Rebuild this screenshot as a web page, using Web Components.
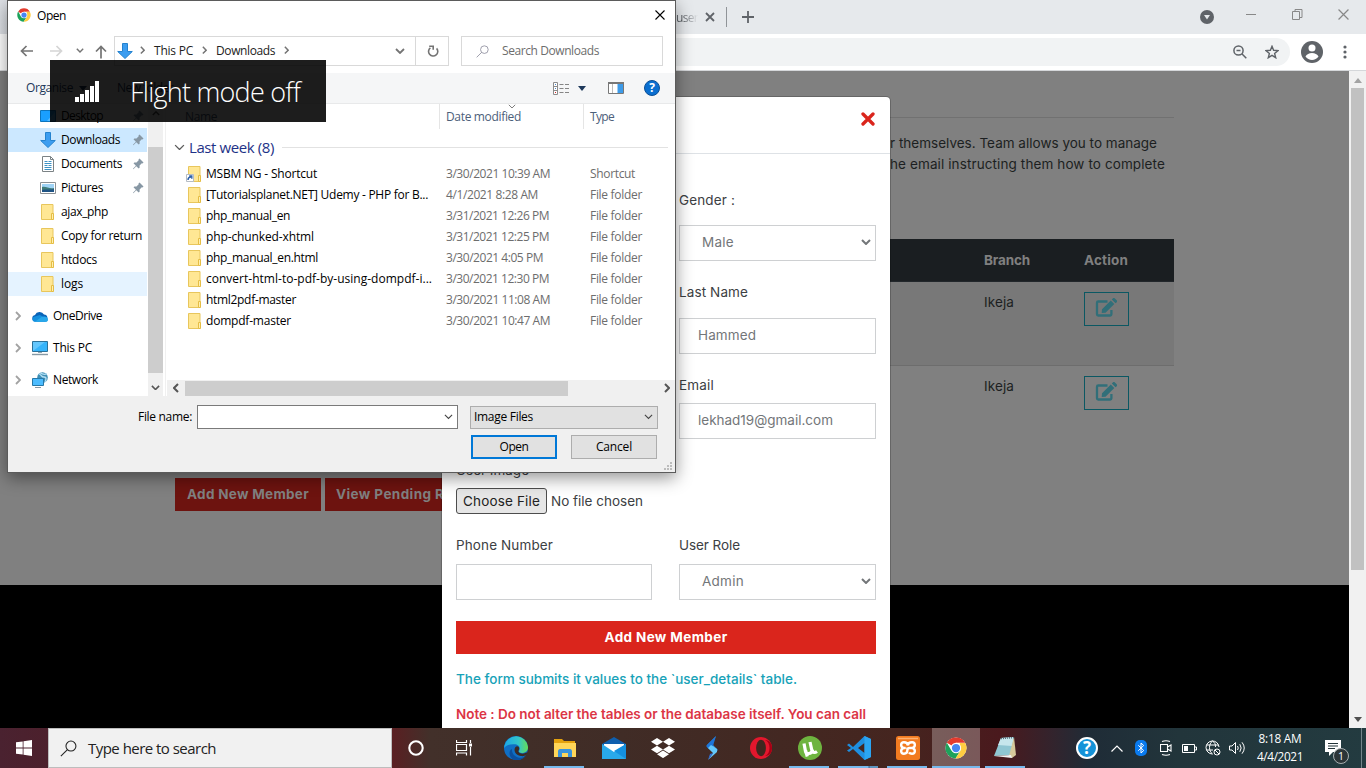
<!DOCTYPE html>
<html lang="en">
<head>
<meta charset="utf-8">
<title>Desktop</title>
<style>
html,body{margin:0;height:100%;overflow:hidden;background:#000}
body{font-family:"Open Sans","Noto Sans",sans-serif}
</style>
</head>
<body>
<desk-top></desk-top>
<script>
const folder = '<path d="M.5.5h11.500v15H.5z" fill="#ffe794" stroke="#e8c65c"/><path d="M10.500 9.500h2v6h-2z" fill="#fff0b0" stroke="#e5bd45"/>';
const chromeArt = '<circle cx="12" cy="12" r="11.500" fill="#fff"/><path d="M12 12 2 6.300A11.500 11.500 0 0 1 22 6.300H12z" fill="#e33b2e"/><path d="M2 6.200A11.500 11.500 0 0 0 11.500 23.500L17 14.800 12 12 7 14.800z" fill="#1da25b"/><path d="M22 6.500A11.500 11.500 0 0 1 11.500 23.500L17 14.800 16 6.500z" fill="#ffcd42"/><circle cx="12" cy="12" r="5.600" fill="#fff"/><circle cx="12" cy="12" r="4.500" fill="#4587f3"/>';
const monitor = '<path d="M.5 1.500h15v10h-15z" fill="#35b4fb" stroke="#2b7199"/><path d="M1 11 13 2H1z" fill="#83d3ff" opacity=".6"/>';
const ICONS = {
 chrome:[24,24,chromeArt],
 close:[10,10,'<path d="M.5.5l9 9M9.500.5l-9 9" stroke="currentColor" stroke-width="1.100"/>'],
 closeTab:[10,10,'<path d="M1 1l8 8M9 1l-8 8" stroke="currentColor" stroke-width="1.800"/>'],
 back:[14,12,'<path d="M13 6H1.500M6.500 1l-5 5 5 5" stroke="currentColor" stroke-width="1.700" fill="none"/>'],
 fwd:[14,12,'<path d="M1 6h11.500M7.500 1l5 5-5 5" stroke="currentColor" stroke-width="1.700" fill="none"/>'],
 up:[12,14,'<path d="M6 13.500V1.500M1 6.500l5-5 5 5" stroke="currentColor" stroke-width="1.700" fill="none"/>'],
 down:[10,6,'<path d="M1 1l4 4 4-4" stroke="currentColor" stroke-width="var(--sw,1.8)" fill="none"/>'],
 right:[6,10,'<path d="M1 1l4 4-4 4" stroke="currentColor" stroke-width="var(--sw,1.8)" fill="none"/>'],
 left:[6,10,'<path d="M5 1L1 5l4 4" stroke="currentColor" stroke-width="2" fill="none"/>'],
 dl:[16,16,'<path d="M5.500.5h5v8h4.800L8 15.500.7 8.500h4.800z" fill="#3c9df0" stroke="#2482ce"/>'],
 refresh:[12,12,'<path d="M9.600 3.400A4.600 4.600 0 1 1 3.400 2.800M2.200 1.200h4v3.600" stroke="currentColor" stroke-width="1.600" fill="none"/>'],
 search:[16,16,'<circle cx="10.300" cy="5.700" r="4.700" stroke="currentColor" stroke-width="var(--sw,1)" fill="none"/><path d="M7 9 .8 15.200" stroke="currentColor" stroke-width="var(--sw,1)"/>'],
 tri:[8,5,'<path d="M0 0h8L4 5z" fill="currentColor"/>'],
 triUp:[8,5,'<path d="M0 5h8L4 0z" fill="currentColor"/>'],
 view:[16,13,'<path d="M.5.5h4v12h-4zM.5 4.500h4M.5 8.500h4" stroke="#8c8c8c" fill="#fff"/><path d="M2 2.500h1M2 6.500h1" stroke="#4a86c8"/><path d="M2 10.500h1" stroke="#d22"/><path d="M6.500 2.500h4M12 2.500h4M6.500 6.500h4M12 6.500h4M6.500 10.500h4M12 10.500h4" stroke="#858585"/>'],
 preview:[16,12,'<path d="M.5.5h15v11h-15z" stroke="#777" fill="#fff"/><path d="M0 1h16" stroke="#777" stroke-width="2"/><path d="M9.500 2h5.500v9H9.500z" fill="#3d9be9"/><path d="M4.500 2v9" stroke="#bbb"/>'],
 help:[16,16,'<circle cx="8" cy="8" r="7.500" fill="#0a6fd0" stroke="#0b4f96"/><text x="8" y="12.400" text-anchor="middle" font-family="Open Sans" font-weight="700" font-size="12" fill="#fff">?</text>'],
 desktop:[16,13,'<path d="M.5.5h15v11h-15z" fill="#1a9fff" stroke="#0c74bd"/><path d="M7 11 15 2v9z" fill="#56bbff"/>'],
 doc:[12,16,'<path d="M.5.5h8l3 3v12H.5z" fill="#fff" stroke="#7b8285"/><path d="M8.500.5v3h3" fill="none" stroke="#7b8285"/><path d="M2.500 5.500h3M6.500 5.500h3M2.500 7.500h7M2.500 9.500h3M6.500 9.500h3M2.500 11.500h7M2.500 13.500h7" stroke="#3c91c4"/>'],
 pic:[16,12,'<path d="M.5.5h15v11h-15z" fill="#fff" stroke="#8b9094"/><path d="M2 2h12v8H2z" fill="#9fd3f5"/><path d="M2 5c4-1 7 2 12 1v4H2z" fill="#3f7c79"/><path d="M2 8c4-1 8 0 12-1v3H2z" fill="#1e5384"/>'],
 folder:[13,16,folder],
 shortcut:[15,16,'<g transform="translate(2)">'+folder+'</g><path d="M.5 8.500h7v7h-7z" fill="#fff" stroke="#b5bcc4"/><path d="M2 14c0-2 1-3 3-3M3.200 10h2.600v2.800" stroke="#2c5fa8" stroke-width="1.400" fill="none"/>'],
 pin:[11,12,'<path d="M6.500.5 10.500 4.500 9.500 5.500 8.800 5.300 6.600 7.500 6.600 9.700 5.700 10.600 3.300 8.200.6 11 0 11.200.2 10.500 2.900 7.700.5 5.300 1.400 4.400 3.500 4.400 5.700 2.200 5.500 1.500z" fill="#8797a4"/>'],
 cloud:[16,11,'<path d="M3 10.500A3.300 3.300 0 0 1 3 4 5 5 0 0 1 12 3.500 3.600 3.600 0 0 1 13 10.500z" fill="#0a64b8"/><path d="M2.500 10.800C0 10.500-.3 7 2 5.700L8 4l7 4c1.300 1.200 0 2.800-1.500 2.800z" fill="#1490df"/><path d="M3 10.800 9.500 6c3-1.500 6.500 0 6.500 2.500 0 1.500-1 2.300-2.300 2.300z" fill="#28a8ea"/>'],
 pc:[16,16,monitor+'<path d="M6 12.500h4" stroke="#8fa6b3"/><path d="M0 14.500h16" stroke="#8799a5" stroke-width="1.400"/>'],
 network:[16,16,'<circle cx="10.500" cy="5.500" r="5.300" fill="#3f8fb5"/><path d="M7 2c3 1 2 3 5 3s2 3 1 5M8 .7c3 2 5 2 7 1" stroke="#b5e0f5" stroke-width="1.300" fill="none"/><path d="M.5 6.500h11v7H.5z" fill="#4cbcff" stroke="#2678a8"/><path d="M3 15.500h6" stroke="#8799a5"/>'],
 bars:[25,21,'<path d="M0 16h4v5H0zM5 13h4v8H5zM10 9h4v12h-4zM15 5h4v16h-4zM20 0h4v21h-4z" fill="#fff"/>'],
 grip:[9,9,'<path d="M6 0h2v2H6zM3 3h2v2H3zM6 3h2v2H6zM0 6h2v2H0zM3 6h2v2H3zM6 6h2v2H6z" fill="#bcbcbc"/>'],
 plus:[12,12,'<path d="M6 0v12M0 6h12" stroke="currentColor" stroke-width="1.800"/>'],
 tabSearch:[14,14,'<circle cx="7" cy="7" r="7" fill="#5f6368"/><path d="M4 5h6L7 9.500z" fill="#e6e9ec"/>'],
 min:[11,11,'<path d="M0 5.500h10" stroke="#888"/>'],
 restore:[11,11,'<path d="M.5 2.500h7v8h-7zM3 2.500v-2h7v8H8" stroke="#888" fill="none"/>'],
 zoom:[14,14,'<circle cx="5.500" cy="5.500" r="4.600" stroke="#5f6368" stroke-width="1.500" fill="none"/><path d="M8.800 8.800l4.500 4.500M3.500 5.500h4" stroke="#5f6368" stroke-width="1.500"/>'],
 star:[14,14,'<path d="M7 1.300 8.600 5.300 13 5.600 9.600 8.400 10.700 12.700 7 10.300 3.300 12.700 4.400 8.400 1 5.600 5.400 5.300z" stroke="#5f6368" stroke-width="1.400" fill="none"/>'],
 avatar:[22,22,'<circle cx="11" cy="11" r="11" fill="#5f6368"/><circle cx="11" cy="7" r="3.500" fill="#fff"/><path d="M4.500 15.500c2-4.700 11-4.700 13 0-3 4.500-10 4.500-13 0z" fill="#fff"/>'],
 dots:[4,14,'<g fill="#5f6368"><circle cx="2" cy="2" r="1.600"/><circle cx="2" cy="7" r="1.600"/><circle cx="2" cy="12" r="1.600"/></g>'],
 x:[14,14,'<path d="M2 2l10 10M12 2L2 12" stroke="#da251c" stroke-width="3.300" stroke-linecap="round"/>'],
 edit:[22,20,'<path d="M12.500 3.500H3.200a1.200 1.200 0 0 0-1.200 1.200v11.600a1.200 1.200 0 0 0 1.200 1.200h12a1.200 1.200 0 0 0 1.200-1.200V12" stroke="#316f79" stroke-width="2.300" fill="none"/><path d="M7 11.300 15.800 2.500 19.300 6 10.500 14.700 6.700 15.100zM16.800 1.500l1-1c.6-.6 1.500-.6 2.100 0L21.700 2.300c.6.600.6 1.400 0 2L20.500 5.300z" fill="#316f79"/>'],
 win:[16,16,'<path d="M0 2.300 6.700 1.400v6.200H0zM7.500 1.300 16 0v7.600H7.500zM0 8.400h6.700v6.200L0 13.700zM7.500 8.400H16V16l-8.500-1.300z" fill="#fff"/>'],
 cortana:[16,16,'<circle cx="8" cy="8" r="6.700" stroke="#fff" stroke-width="2.100" fill="none"/>'],
 task:[16,16,'<path d="M.5 0v2.500h10V0M.5 15.500V13h10v2.500M.5 4.500h10v6H.5zM14.500 0v3M14.500 7v8.500" stroke="#fff" fill="none" stroke-width="1.200"/><path d="M13 3.500h3v3h-3z" fill="#fff"/>'],
 edge:[24,24,'<defs><linearGradient id="a" x2="1"><stop offset="0" stop-color="#1ba8e8"/><stop offset=".6" stop-color="#33c5c9"/><stop offset="1" stop-color="#66dc55"/></linearGradient></defs><circle cx="12" cy="12" r="12" fill="#0f6fc5"/><path d="M.3 10A12 12 0 0 1 24 11c.2 4-3 6-6.200 6-2.300 0-3.500-1-2.600-2.200C17 11 14 8.300 10.500 8.300 6 8 2 9 .3 12z" fill="url(#a)"/><path d="M8 13c-.6 5 4 9.200 9.500 8.800 2-.2 4-1.400 5-2.500A12 12 0 0 1 9 23.600C4 20 5 14 8 13z" fill="#0b4f9e"/><path d="M11.500 11c1.500-1.400 3.600-.4 3.700 1.500 0 1.600-1.400 2.300-.6 3.500 1.700 2.200 5.400 2 8 .6.800-.3 1 .1.700.7-1.400 2.600-4 3.200-6.500 2.700C11.500 19 9 14.500 11.500 11z" fill="#3a2a25"/>'],
 explorer:[22,19,'<path d="M0 0h8l2 2h11v5H0z" fill="#e4a20e"/><path d="M0 4h22v14H0z" fill="#ffd659"/><path d="M4 18v-5.500c0-1.500.8-2.500 2-2.500h10c1.200 0 2 1 2 2.500V18h-4v-4H8v4z" fill="#3a94dc"/>'],
 mail:[24,22,'<path d="M0 7 12 0l12 7v4H0z" fill="#0f5fae"/><path d="M2 7h20v8H2z" fill="#fff"/><path d="M0 7l12 8L24 7v15H0z" fill="#29a9ea"/><path d="M24 7v15L12 14z" fill="#1490df"/>'],
 dropbox:[24,20,'<path d="M6 0l6 3.800-6 3.800L0 3.800zM18 0l6 3.800-6 3.800-6-3.800zM6 7.700l6 3.800-6 3.800-6-3.800zM18 7.700l6 3.800-6 3.800-6-3.800zM12 12.500l6 3.800-6 3.800-6-3.800z" fill="#fff"/>'],
 shift:[14,24,'<path d="M11 0 2 9v2l7 6 4-3-6-6z" fill="#2e9cf0"/><path d="M11 0 8 10 4 13 1 10z" fill="#1d75d8"/><path d="M3 24l9-8v-3L6 9l-3 3 5 5z" fill="#65c8fa"/><path d="M3 24l2-6 3-1z" fill="#2f6fe0"/>'],
 opera:[22,22,'<circle cx="11" cy="11" r="11" fill="#e3172d"/><path d="M15 3c6 2 6 14 0 16 5 0 7-4 7-8s-2-8-7-8z" fill="#a70014"/><ellipse cx="11" cy="11" rx="4.900" ry="8.300" fill="#40271f"/>'],
 ut:[24,24,'<circle cx="12" cy="12" r="12" fill="#6eb43f"/><path d="M6 7.500l1.500 8c.5 3 6 2.500 6.500-.5l-2-9M14.300 14c.6 3 2.500 3 4.700 1.500M7.600 14.500l1.700 6" stroke="#fff" stroke-width="3.200" fill="none"/>'],
 code:[24,24,'<path d="M17.500 0 24 3v18l-6.500 3L6 13 2 16l-2-1.500L4 12 0 9l2-1.500L6 11zM17.500 7 11 12l6.500 5z" fill="#1f8fe0" fill-rule="evenodd"/><path d="M17.500 0 24 3v18l-6.500 3z" fill="#2ba5f2"/>'],
 xampp:[24,24,'<rect width="24" height="24" rx="2.500" fill="#f27b20"/><path d="M2 2.500h20" stroke="#ffb170" stroke-width="1.500"/><path d="M12 9.500C11.500 7 10 6.300 8 6.300 4.300 6.300 4.300 11 7.500 12 4.300 13 4.300 17.700 8 17.700 10.500 17.700 11.300 16.300 11.300 14.500 11.300 12.800 12 12 13.500 12H16.500M7.500 12H9.500M12 9.500C12 7.500 13.500 6.300 16 6.300 19.700 6.300 19.700 11 16.500 12 19.700 13 19.700 17.700 16 17.700 14.700 17.700 13.700 17.400 13 16.500" stroke="#fff" stroke-width="2.400" fill="none"/>'],
 notepad:[23,22,'<path d="M7 1 20 0l-3 18L0 19z" fill="#8fc6d2"/><path d="M7 1 20 0l-2 9L4 8z" fill="#c6e6ec"/><path d="M20 0l2 18-4 3-3-2z" fill="#d7c89a"/><path d="M0 19l17-1 1 3z" fill="#f2f2f2"/><path d="M7 1.500 20 .5" stroke="#526f79" stroke-width="1.600" stroke-dasharray="1 1"/>'],
 helpTray:[22,22,'<circle cx="11" cy="11" r="10" fill="#1492d8" stroke="#fff" stroke-width="2"/><text x="11" y="17" text-anchor="middle" font-family="Open Sans" font-weight="700" font-size="17" fill="#fff">?</text>'],
 chev:[12,7,'<path d="M.5 6.500 6 1l5.500 5.500" stroke="#fff" fill="none" stroke-width="1.200"/>'],
 bt:[12,16,'<rect width="12" height="16" rx="5" fill="#0a7bef"/><path d="M3.300 5.300l5.400 5.200L6 13V3l2.700 2.500-5.400 5.200" stroke="#fff" fill="none"/>'],
 cam:[12,16,'<path d="M.5 4.500h7v7h-7zM7.500 7l3.500-2v6L7.500 9M2 1.500q4-1.500 8 0M2 14.500q4 1.500 8 0" stroke="#fff" fill="none" stroke-width="1.100"/>'],
 bat:[15,9,'<path d="M.5.5h12v8H.5zM13 3h1.500v3H13" stroke="#fff" fill="none"/><path d="M2 2h4v5H2z" fill="#fff"/>'],
 globe:[16,16,'<path d="M14 7A6.500 6.500 0 1 0 7.500 14M7.500 1C3.500 4 3.500 11 7.500 14M7.500 1c2.500 1.500 3 3.500 3 6M1.500 5h12M1.500 10H8" stroke="#fff" fill="none"/><circle cx="12" cy="12" r="3" stroke="#fff" fill="none"/><path d="M10 10l4 4" stroke="#fff"/>'],
 vol:[17,14,'<path d="M.5 5h2.500L6.500 1.500v11L3 9H.5zM8.500 5q1.500 2 0 4M10.800 3.200q2.700 3.800 0 7.600M13 1.300q4.500 5.700 0 11.400" stroke="#fff" fill="none"/>'],
 note:[16,16,'<path d="M0 0h16v12H8l-4 4v-4H0z" fill="#fff"/><path d="M3 3.500h10M3 6h10M3 8.500h7" stroke="#233439"/>']
};
class UiIcon extends HTMLElement{
  connectedCallback(){
    if(this.shadowRoot) return;
    const [w,h,body]=ICONS[this.getAttribute('name')];
    const s=this.getAttribute('size');
    const W=s?+s:w, H=s?+s*h/w:h;
    this.attachShadow({mode:'open'}).innerHTML=`<style>:host{display:block;flex:none;width:${W}px;height:${H}px}svg{display:block}</style><svg width="${W}" height="${H}" viewBox="0 0 ${w} ${h}">${body}</svg>`;
  }
}
/* A single line of text tracked to an exact width given in the w attribute. */
class UiText extends HTMLElement{
  connectedCallback(){
    if(this.shadowRoot) return;
    this.attachShadow({mode:'open'}).innerHTML='<style>:host{display:block;flex:none;white-space:pre}span{display:inline-block}</style><span><slot></slot></span>';
    const w=+this.getAttribute('w');
    if(!w) return;
    const natural=this.shadowRoot.querySelector('span').getBoundingClientRect().width;
    this.style.letterSpacing=((w-natural)/this.textContent.length).toFixed(3)+'px';
    this.style.width=w+'px';
  }
}
function component(name, css, html){
  const t=document.createElement('template');
  t.innerHTML='<style>*{box-sizing:border-box}'+css+'</style>'+html;
  customElements.define(name, class extends HTMLElement{
    constructor(){super();this.attachShadow({mode:'open'}).append(t.content.cloneNode(true));}
  });
}

component('desk-top',`
:host{display:grid;grid-template-rows:728px 40px;width:1366px;height:768px;position:relative;overflow:hidden}
file-dialog{position:absolute;left:7px;top:0}
flight-toast{position:absolute;left:50px;top:60px}`,
`<browser-window></browser-window><task-bar></task-bar><file-dialog></file-dialog><flight-toast></flight-toast>`);

component('browser-window',`
:host{display:grid;grid-template-rows:34px 37px 657px;min-width:0}
.tabs{display:flex;align-items:center;background:linear-gradient(90deg,#dee1e6,#e6e9ec 60px);padding-left:676px;color:#5f6368}
.t{font-size:12px;width:22px;-webkit-mask-image:linear-gradient(90deg,#000 30%,transparent)}
.sep{width:1px;height:20px;background:#909498;margin:0 15px 0 11px}
.bar{display:flex;align-items:center;background:#fff;border-bottom:1px solid #d5d7da}
.omni{width:1230px;margin-left:60px;height:28px;border-radius:14px;background:#f1f3f4;display:flex;align-items:center;justify-content:flex-end;padding-right:11px;gap:18px}
.view{display:flex}
web-page{flex:1}
.scroll{width:17px;background:#f1f1f1;display:flex;flex-direction:column;align-items:center;padding:7px 0 6px;color:#a3a3a3}
.thumb{width:13px;height:482px;background:#c1c1c1;margin-top:5px}`,
`<div class="tabs"><div class="t"><ui-text w="22">user</ui-text></div><ui-icon name="closeTab" style="margin-left:7px"></ui-icon><i class="sep"></i><ui-icon name="plus"></ui-icon>
<ui-icon name="tabSearch" style="margin-left:446px"></ui-icon><ui-icon name="min" style="margin:-5px 0 0 32px"></ui-icon><ui-icon name="restore" style="margin:-6px 0 0 35px"></ui-icon><ui-icon name="close" size="11" style="margin:-6px 0 0 35px;color:#888"></ui-icon></div>
<div class="bar"><div class="omni"><ui-icon name="zoom"></ui-icon><ui-icon name="star"></ui-icon></div><ui-icon name="avatar" style="margin-left:11px"></ui-icon><ui-icon name="dots" style="margin-left:20px"></ui-icon></div>
<div class="view"><web-page></web-page><div class="scroll"><ui-icon name="triUp"></ui-icon><div class="thumb"></div><ui-icon name="tri" style="margin-top:auto;color:#505050"></ui-icon></div></div>`);

component('web-page',`
:host{display:grid;grid-template-rows:514px 143px;background:#000;position:relative;overflow:hidden;font-family:Inter,"Open Sans",sans-serif;color:#1c1f21;font-size:13.5px}
.page{background:#808080;padding:46px 175px 0}
hr{border:0;border-top:1px solid #717171;margin:0 0 15px}
.p{line-height:21px;display:flex;flex-direction:column;width:999px;padding-left:715px}
table{border-collapse:collapse;width:999px;margin-top:64px;table-layout:fixed}
th,td{padding:10px 0 0;text-align:left;vertical-align:top;line-height:20px}
th{height:42px;background:#1a1e21;color:#808080;border-bottom:1px solid #22272b;font-weight:700;line-height:23px}
td{height:84px}
tr.odd td{background:#787878;border-bottom:1px solid #6d6d6d}
.edit{width:45px;height:34px;border:1px solid #0b5863;display:flex;align-items:center;justify-content:center;padding:0 2px 2px 0}
.btns{display:flex;gap:4px;margin-top:29px}
.b{height:33px;background:#6d130f;color:#808080;font-weight:700;display:flex;align-items:center;padding:0 12px 1px}
member-modal{position:absolute;left:442px;top:26px}`,
`<div class="page"><hr><div class="p"><ui-text w="267">r themselves. Team allows you to manage</ui-text><ui-text w="275">he email instructing them how to complete</ui-text></div>
<table><colgroup><col style="width:809px"><col style="width:100px"><col></colgroup>
<tr><th></th><th><ui-text w="46">Branch</ui-text></th><th><ui-text w="44">Action</ui-text></th></tr>
<tr class="odd"><td></td><td><ui-text w="30">Ikeja</ui-text></td><td><div class="edit"><ui-icon name="edit"></ui-icon></div></td></tr>
<tr><td></td><td><ui-text w="30">Ikeja</ui-text></td><td><div class="edit"><ui-icon name="edit"></ui-icon></div></td></tr></table>
<div class="btns"><div class="b"><ui-text w="122">Add New Member</ui-text></div><div class="b" style="padding-left:11px"><ui-text w="164">View Pending Requests</ui-text></div></div></div>
<member-modal></member-modal>`);

component('form-box',`
:host{display:flex;align-items:center;justify-content:space-between;height:36px;border:1px solid #ced0d2;background:#fff;padding:0 4px 2px 18px;color:#737679}`,
`<slot></slot><slot name="end"></slot>`);

component('member-modal',`
:host{display:block;width:448px;height:700px;background:#fff;border-radius:4px 4px 0 0;color:#3c4043;font-size:13.5px;box-shadow:0 0 0 1px rgba(0,0,0,.2)}
.head{height:57px;border-bottom:1px solid #dee2e6;display:flex;justify-content:flex-end;align-items:flex-start;padding:15px 15px 0 0}
.grid{display:grid;grid-template-columns:196px 197px;column-gap:27px;padding:0 14px;grid-template-rows:71px 36px 57px 36px 49px 36px 49px 26px 50px 36px}
.l{display:flex;align-items:flex-end;line-height:20px;padding-bottom:15px}
.file{display:flex;align-items:center;gap:4px}
.cf{height:26px;border:1px solid #4d4d4d;border-radius:3px;background:#e6e6e6;display:flex;align-items:center;padding:0 6px;color:#222}
form-box{--sw:2}
.sub{margin:21px 14px 15px;height:33px;background:#da251c;color:#fff;font-weight:700;display:flex;align-items:center;justify-content:center;padding-bottom:1px}
.n{padding-left:14px;line-height:20px}`,
`<div class="head"><ui-icon name="x"></ui-icon></div>
<div class="grid">
<div class="l"></div><div class="l"><ui-text w="56">Gender :</ui-text></div>
<form-box></form-box><form-box style="padding-left:22px"><ui-text w="32">Male</ui-text><ui-icon slot="end" name="down"></ui-icon></form-box>
<div class="l"></div><div class="l" style="padding-bottom:16px"><ui-text w="69">Last Name</ui-text></div>
<form-box></form-box><form-box><ui-text w="58">Hammed</ui-text></form-box>
<div class="l"></div><div class="l" style="padding-bottom:8px"><ui-text w="35">Email</ui-text></div>
<form-box></form-box><form-box><ui-text w="135">lekhad19@gmail.com</ui-text></form-box>
<div class="l" style="padding-bottom:8px"><ui-text w="73">User Image</ui-text></div><div></div>
<div class="file"><div class="cf"><ui-text w="77">Choose File</ui-text></div><ui-text w="92">No file chosen</ui-text></div><div></div>
<div class="l" style="padding-bottom:9px"><ui-text w="97">Phone Number</ui-text></div><div class="l" style="padding-bottom:9px"><ui-text w="61">User Role</ui-text></div>
<form-box></form-box><form-box style="padding-left:22px"><ui-text w="42">Admin</ui-text><ui-icon slot="end" name="down"></ui-icon></form-box>
</div>
<div class="sub"><ui-text w="123">Add New Member</ui-text></div>
<div class="n" style="color:#17a2b8;font-weight:500"><ui-text w="341">The form submits it values to the \`user_details\` table.</ui-text></div>
<div class="n" style="color:#dc3545;font-weight:600;margin-top:15px"><ui-text w="410">Note : Do not alter the tables or the database itself. You can call</ui-text></div>`);

const side=(icon,t,w,pin,cls='')=>`<div class="s ${cls}"><span class="ic"><ui-icon name="${icon}"></ui-icon></span><ui-text w="${w}">${t}</ui-text>${pin?'<ui-icon class="pin" name="pin"></ui-icon>':''}</div>`;
const root=(icon,t,w)=>`<div class="r"><ui-icon name="right" style="color:#a2a2a2"></ui-icon><ui-icon name="${icon}" style="margin:0 5px 0 11px"></ui-icon><ui-text w="${w}">${t}</ui-text></div>`;
const file=(t,w,d,dw,ty='File folder',tw=52,ic='folder')=>`<div class="f"><span class="fi"><ui-icon name="${ic}"></ui-icon></span><span class="fn"><ui-text w="${w}">${t}</ui-text></span><span class="fd"><ui-text w="${dw}">${d}</ui-text></span><ui-text w="${tw}">${ty}</ui-text></div>`;

component('file-dialog',`
:host{display:grid;grid-template-rows:31px 41px 31px 292px 76px;width:669px;height:473px;border:1px solid #5b5b5b;background:#fff;font-size:12px;line-height:16px;color:#000;box-shadow:0 5px 16px rgba(0,0,0,.42)}
.title{display:flex;align-items:center;padding:0 10px 3px 9px}
.nav{display:flex;align-items:flex-start;padding:4px 0 0 12px;color:#747474}
.nav>ui-icon{margin-top:9px}
.addr{margin-left:7px;width:335px;height:30px;border:1px solid #d9d9d9;display:flex;align-items:center;padding:0 0 1px 2px}
.addr ui-text{color:#222}
.ref{margin-left:10px;border-left:1px solid #d9d9d9;height:28px;display:flex;align-items:center;padding-left:11px}
.find{margin-left:12px;width:202px;height:30px;border:1px solid #d9d9d9;display:flex;align-items:center;padding-left:14px;color:#8a8a9a}
.find ui-text{color:#6d6d6d}
.tools{display:flex;align-items:center;background:#f5f6f7;border-bottom:1px solid #e8e9ea;padding-left:18px;color:#1e395b}
.body{display:grid;grid-template-columns:140px 15px 4px 508px}
.s{height:24px;width:139px;display:flex;align-items:center}
.ic{width:53px;padding-left:26px;display:flex;justify-content:center}
.pin{margin-left:auto;margin-right:3px}
.sel{background:#cce8ff}.hov{background:#e5f3ff}
.r{height:32px;display:flex;align-items:center;padding-left:7px}
.vs{background:#f0f0f0;display:flex;flex-direction:column;align-items:center;color:#555}
.vt{width:15px;height:226px;background:#cdcdcd;margin-top:31px}
.gap{border-right:1px solid #f0f0f0;margin-right:1px}
.list{display:flex;flex-direction:column}
.cols{display:flex;height:25px;color:#4c607a;line-height:25px}
.cols>div{border-right:1px solid #e5e5e5;height:25px}
.grp{display:flex;align-items:center;margin:8px 7px 6px;height:20px;color:#1e3287;font-size:15px}
.line{flex:1;height:1px;background:#e2e2e2;margin-left:8px}
.f{height:21px;display:flex;align-items:center;color:#6d6d6d}
.fi{width:39px;padding-right:5px;display:flex;justify-content:flex-end}
.fn{width:240px;color:#000}.fd{width:144px}
.hs{margin-top:auto;height:16px;background:#f0f0f0;display:flex;align-items:center;padding:0 5px 0 6px;color:#555;--sw:2}
.ht{width:383px;height:15px;background:#cdcdcd;margin:0 auto 0 6px}
.foot{background:#f0f0f0;padding:9px 0 0 130px;position:relative}
.r1,.r2{display:flex;align-items:center;height:24px}
.in{margin-left:5px;width:261px;height:24px;background:#fff;border:1px solid #7a7a7a;display:flex;align-items:center;justify-content:flex-end;padding-right:4px}
.pick{margin-left:12px;width:188px;height:23px;background:#e1e1e1;border:1px solid #adadad;display:flex;align-items:center;justify-content:space-between;padding:0 4px 0 3px}
.r2{margin-top:6px;padding-left:333px;gap:14px}
.btn{width:86px;height:24px;background:#e1e1e1;border:1px solid #adadad;display:flex;align-items:center;justify-content:center}
.main{border:2px solid #0078d7}
.grip{position:absolute;right:2px;bottom:1px}`,
`<div class="title"><ui-icon name="chrome" size="14"></ui-icon><ui-text w="29" style="margin:1px 0 0 6px">Open</ui-text><ui-icon name="close" style="margin-left:auto"></ui-icon></div>
<div class="nav"><ui-icon name="back"></ui-icon><ui-icon name="fwd" style="margin-left:15px;color:#d5d5d5"></ui-icon><ui-icon name="down" size="8" style="margin:12px 0 0 13px"></ui-icon><ui-icon name="up" style="margin-left:11px"></ui-icon>
<div class="addr"><ui-icon name="dl"></ui-icon><ui-icon name="right" size="5" style="margin:0 9px 0 7px"></ui-icon><ui-text w="39">This PC</ui-text><ui-icon name="right" size="5" style="margin:0 9px"></ui-icon><ui-text w="59">Downloads</ui-text><ui-icon name="right" size="5" style="margin-left:9px"></ui-icon><ui-icon name="down" style="margin-left:106px"></ui-icon><div class="ref"><ui-icon name="refresh"></ui-icon></div></div>
<div class="find"><ui-icon name="search" size="13"></ui-icon><ui-text w="97" style="margin-left:13px">Search Downloads</ui-text></div></div>
<div class="tools"><ui-text w="47">Organise</ui-text><ui-icon name="tri" style="margin-left:6px"></ui-icon><ui-text w="56" style="margin-left:30px">New folder</ui-text><ui-icon name="view" style="margin-left:380px"></ui-icon><ui-icon name="tri" style="margin-left:9px"></ui-icon><ui-icon name="preview" style="margin-left:22px"></ui-icon><ui-icon name="help" style="margin-left:20px"></ui-icon></div>
<div class="body"><div class="side">${side('desktop','Desktop',42,1)}${side('dl','Downloads',59,1,'sel')}${side('doc','Documents',61,1)}${side('pic','Pictures',42,1)}${side('folder','ajax_php',47)}${side('folder','Copy for return',81)}${side('folder','htdocs',36)}${side('folder','logs',22,0,'hov')}<div style="height:4px"></div>${root('cloud','OneDrive',49)}${root('pc','This PC',39)}${root('network','Network',45)}</div>
<div class="vs"><ui-icon name="down" size="8" style="transform:rotate(180deg);margin-top:7px"></ui-icon><div class="vt"></div><ui-icon name="down" size="9" style="margin:auto 0 6px"></ui-icon></div>
<div class="gap"></div>
<div class="list"><div class="cols"><div style="width:273px;padding-left:18px"><ui-text w="32">Name</ui-text></div><div style="width:144px;padding-left:6px;position:relative"><ui-text w="75">Date modified</ui-text><ui-icon name="down" size="8" style="position:absolute;left:68px;top:0;--sw:1.2;color:#777"></ui-icon></div><ui-text w="24" style="margin-left:6px">Type</ui-text></div>
<div class="grp"><ui-icon name="down" size="11" style="--sw:1.2;color:#5c5c5c"></ui-icon><ui-text w="85" style="margin-left:4px">Last week (8)</ui-text><i class="line"></i></div>
${file('MSBM NG - Shortcut',111,'3/30/2021 10:39 AM',104,'Shortcut',45,'shortcut')}
${file('[Tutorialsplanet.NET] Udemy - PHP for B...',222,'4/1/2021 8:28 AM',92)}
${file('php_manual_en',84,'3/31/2021 12:26 PM',103)}
${file('php-chunked-xhtml',108,'3/31/2021 12:25 PM',103)}
${file('php_manual_en.html',112,'3/30/2021 4:05 PM',97)}
${file('convert-html-to-pdf-by-using-dompdf-i...',226,'3/30/2021 12:30 PM',103)}
${file('html2pdf-master',90,'3/30/2021 11:08 AM',104)}
${file('dompdf-master',85,'3/30/2021 10:47 AM',104)}
<div class="hs"><ui-icon name="left"></ui-icon><div class="ht"></div><ui-icon name="right"></ui-icon></div></div></div>
<div class="foot"><div class="r1"><ui-text w="54">File name:</ui-text><div class="in"><ui-icon name="down" size="9" style="--sw:1.2;color:#444"></ui-icon></div><div class="pick"><ui-text w="59">Image Files</ui-text><ui-icon name="down" size="9" style="--sw:1.2;color:#444"></ui-icon></div></div>
<div class="r2"><div class="btn main"><ui-text w="29">Open</ui-text></div><div class="btn"><ui-text w="36">Cancel</ui-text></div></div><ui-icon class="grip" name="grip"></ui-icon></div>`);

component('flight-toast',`
:host{display:flex;align-items:center;width:276px;height:62px;background:rgba(0,0,0,.885);color:#fff;padding-left:25px;font-size:27px;font-weight:300;line-height:36px}`,
`<ui-icon name="bars"></ui-icon><ui-text w="170" style="margin:1px 0 0 30px">Flight mode off</ui-text>`);

const app=(n,cls='',s='')=>`<div class="app ${cls}"><ui-icon name="${n}" ${s}></ui-icon></div>`;
component('task-bar',`
:host{display:flex;color:#fff;background:linear-gradient(90deg,#4a2230 0,#4c202c 48px,#5a1f22 392px,#42302a 430px,#402c26 620px,#45251f 900px,#4a191d 1000px,#34232c 1050px,#1f2c37 1090px,#22353b 1180px,#233b40 1366px)}
.start{width:48px;display:flex;align-items:center;justify-content:center}
.find{width:344px;background:#f1f1f1;border:1px solid #bdbdbd;display:flex;align-items:center;padding-left:11px;color:#222;font-size:15px}
.app{width:49px;display:flex;align-items:center;justify-content:center;position:relative}
.sys{width:48px}
.on::after{content:"";position:absolute;bottom:0;left:4px;width:40px;height:2px;background:#76b9ed}
.two::after{background:linear-gradient(90deg,#76b9ed 30px,#3d698c 31px,#5d94be 32px)}
.cur{width:48px;background:rgba(255,255,255,.27);margin-right:1px}
.cur::after{content:"";position:absolute;bottom:0;left:0;width:48px;height:2px;background:#76b9ed}
.tray{display:flex;align-items:center;padding-left:46px}
.clock{font-size:11.8px;line-height:18px;display:flex;flex-direction:column;align-items:center;width:50px;margin:-2px 0 0 9px}
.act{position:relative;margin-left:20px}
.badge{position:absolute;left:8px;top:8px;width:16px;height:16px;border-radius:50%;background:#2c3538;border:1px solid #a9b0b2;font-size:10.5px;line-height:14px;text-align:center}
.end{width:1px;height:40px;background:#73858a;margin-left:20px}`,
`<div class="start"><ui-icon name="win"></ui-icon></div><div class="find"><ui-icon name="search" size="17"></ui-icon><ui-text w="128" style="margin-left:11px">Type here to search</ui-text></div>
${app('cortana','sys')}${app('task','sys')}<span style="width:3px"></span>${app('edge')}${app('explorer','on')}${app('mail')}${app('dropbox')}${app('shift')}${app('opera')}${app('ut','on')}${app('code','on two')}${app('xampp','on')}${app('chrome','cur','size="22"')}${app('notepad','on')}
<div class="tray"><ui-icon name="helpTray"></ui-icon><ui-icon name="chev" style="margin-left:13px"></ui-icon><ui-icon name="bt" style="margin-left:12px"></ui-icon><ui-icon name="cam" style="margin-left:13px"></ui-icon><ui-icon name="bat" style="margin-left:10px"></ui-icon><ui-icon name="globe" style="margin-left:8px"></ui-icon><ui-icon name="vol" style="margin-left:8px"></ui-icon>
<div class="clock"><ui-text w="43">8:18 AM</ui-text><ui-text w="46">4/4/2021</ui-text></div><div class="act"><ui-icon name="note"></ui-icon><div class="badge">1</div></div><i class="end"></i></div>`);

customElements.define('ui-icon',UiIcon);
customElements.define('ui-text',UiText);
</script>
</body>
</html>
